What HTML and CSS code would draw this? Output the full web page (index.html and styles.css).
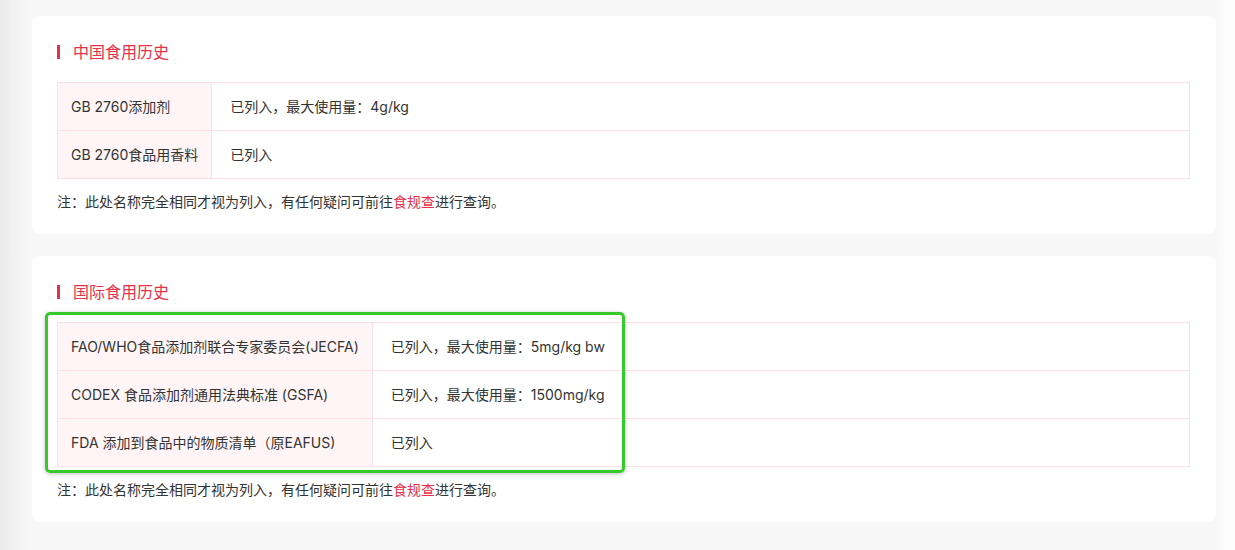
FILE: index.html
```html
<!DOCTYPE html>
<html lang="zh-CN">
<head>
<meta charset="utf-8">
<title>食用历史</title>
<link rel="stylesheet" href="styles.css">
</head>
<body>
<main class="page">
  <section class="card">
    <h2 class="card-title">中国食用历史</h2>
    <table class="info-table">
      <tr><th>GB 2760添加剂</th><td>已列入，最大使用量：4g/kg</td></tr>
      <tr><th>GB 2760食品用香料</th><td>已列入</td></tr>
    </table>
    <p class="note">注：此处名称完全相同才视为列入，有任何疑问可前往<a href="#">食规查</a>进行查询。</p>
  </section>
  <section class="card">
    <h2 class="card-title">国际食用历史</h2>
    <table class="info-table">
      <tr><th>FAO/WHO食品添加剂联合专家委员会(JECFA)</th><td>已列入，最大使用量：5mg/kg bw</td></tr>
      <tr><th>CODEX 食品添加剂通用法典标准 (GSFA)</th><td>已列入，最大使用量：1500mg/kg</td></tr>
      <tr><th>FDA 添加到食品中的物质清单（原EAFUS)</th><td>已列入</td></tr>
    </table>
    <p class="note">注：此处名称完全相同才视为列入，有任何疑问可前往<a href="#">食规查</a>进行查询。</p>
    <div class="highlight"></div>
  </section>
</main>
</body>
</html>
```

FILE: styles.css
```css
* { box-sizing: border-box; }
html, body { margin: 0; padding: 0; }
body {
  width: 1235px;
  height: 550px;
  overflow: hidden;
  background: linear-gradient(to right, #e9e9e9 0px, #f1f1f1 12px, #f6f6f6 28px, #f7f7f7 40px, #f7f7f7 1216px, #fbfbfb 1222px, #fcfcfc 1235px);
  font-family: "Inter", "Noto Sans CJK SC", sans-serif;
  color: #333;
  font-size: 14px;
}
.page {
  display: flex;
  flex-direction: column;
  gap: 22px;
  padding: 16px 19px 0 32px;
}
.card {
  position: relative;
  background: #fff;
  border-radius: 8px;
  padding: 24px 26px 21px 25px;
}
.card-title {
  margin: 0;
  height: 24px;
  line-height: 24px;
  font-size: 16px;
  font-weight: 400;
  color: #e8304a;
  display: flex;
  align-items: center;
  gap: 13px;
}
.card-title::before {
  content: "";
  width: 3px;
  height: 14px;
  background: #e8304a;
}
.info-table {
  width: 100%;
  margin-top: 18px;
  border-collapse: collapse;
}
.info-table th,
.info-table td {
  border: 1px solid #fde0e3;
  padding: 13px 13px;
  line-height: 21px;
  font-weight: normal;
  text-align: left;
  color: #333;
}
.info-table th {
  width: 1%;
  white-space: nowrap;
  background: #fff5f6;
}
.info-table td {
  padding-left: 18px;
  white-space: nowrap;
}
.note {
  margin: 12px 0 0;
  line-height: 22px;
  color: #333;
}
.note a {
  color: #e8304a;
  text-decoration: none;
}
.highlight {
  position: absolute;
  left: 13px;
  top: 56px;
  width: 580px;
  height: 161px;
  border: 3px solid #37c92c;
  border-radius: 5px;
  box-shadow: 0 1px 4px rgba(0,0,0,0.25);
  pointer-events: none;
}
```
